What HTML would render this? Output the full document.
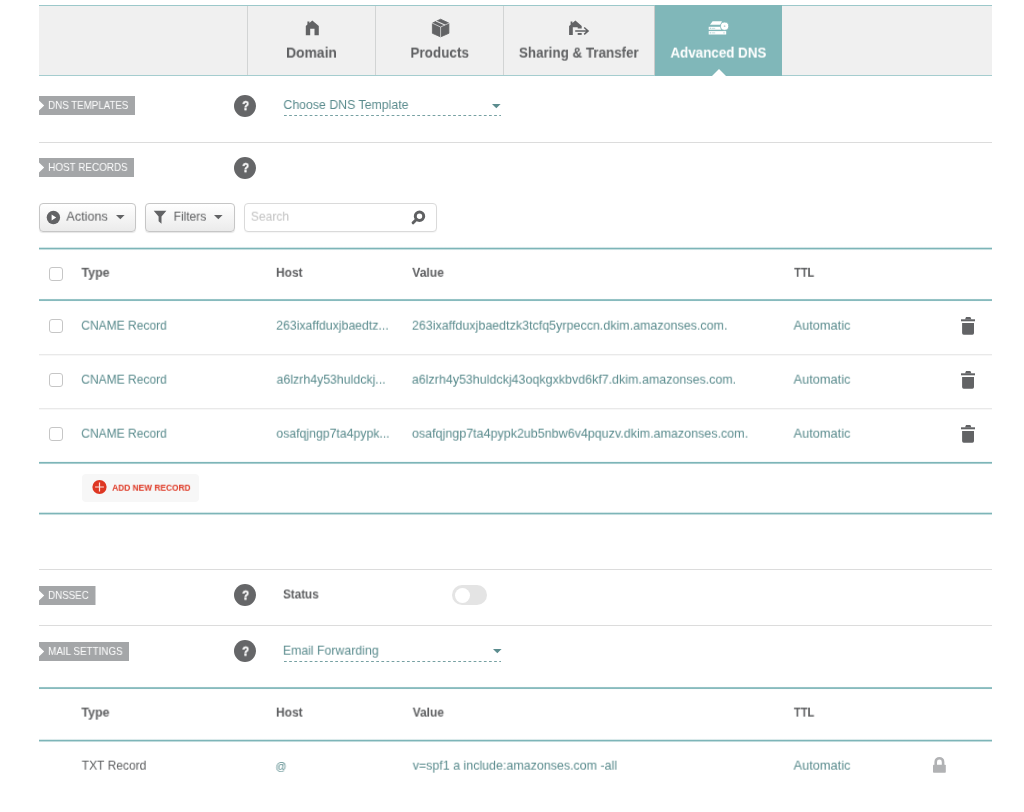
<!DOCTYPE html>
<html lang="en">
<head>
<meta charset="utf-8">
<title>Advanced DNS</title>
<style>
html,body{margin:0;padding:0;background:#fff;}
body{width:1024px;height:812px;position:relative;overflow:hidden;font-family:"Liberation Sans",sans-serif;}
.t{position:absolute;will-change:transform;white-space:nowrap;line-height:20px;height:20px;transform-origin:0 50%;}
.q{-webkit-text-stroke:0.35px #fff;}
.ic{position:absolute;display:block;overflow:visible;}
.tabbar{position:absolute;left:39px;top:5px;width:953px;height:69px;background:#f0f0f0;border-top:1px solid #9cc8ca;border-bottom:1px solid #a5cdcf;}
.vsep{position:absolute;top:6px;width:1px;height:69px;background:#d2d4d4;}
.active{position:absolute;left:655px;top:5px;width:127px;height:71px;background:#80b7b9;}
.notch{position:absolute;left:711.5px;top:69px;width:0;height:0;border-left:7px solid transparent;border-right:7px solid transparent;border-bottom:7px solid #fff;}
.tag{position:absolute;left:39px;height:19px;background:#a4a6a8;clip-path:polygon(0 0,100% 0,100% 100%,0 100%,0 14.5px,5.2px 9.5px,0 4.5px);}
.help{position:absolute;left:234px;width:22px;height:22px;border-radius:50%;background:#656668;}
.hr{position:absolute;left:39px;width:953px;height:1px;background:#dcdcdc;}
.gl{position:absolute;left:39px;width:953px;height:2px;background:linear-gradient(180deg,#e9e9e9 0,#e9e9e9 1px,#f7f7f7 1px,#f7f7f7 2px);}
.tl{position:absolute;left:39px;width:953px;}
.btn{position:absolute;box-sizing:border-box;top:203px;height:29px;border:1px solid #c6c6c6;border-radius:4px;background:linear-gradient(180deg,#ffffff 0%,#f4f4f4 55%,#ebebeb 100%);box-shadow:0 1px 1px rgba(0,0,0,.10);}
.search{position:absolute;left:244px;top:203px;width:191px;height:27px;border:1px solid #dadada;border-radius:4px;background:#fff;box-shadow:0 1px 1px rgba(0,0,0,.04);}
.cb{position:absolute;left:49px;width:12px;height:12px;border:1px solid #c6c6c6;border-radius:3px;background:#fff;}
.addbtn{position:absolute;left:82px;top:474px;width:117px;height:27.5px;border-radius:4px;background:#f7f7f7;}
.toggle{position:absolute;left:452px;top:585.2px;width:35px;height:20px;border-radius:10px;background:#e4e4e4;}
.toggle i{position:absolute;left:2.8px;top:2.5px;width:15px;height:15px;border-radius:50%;background:#fff;}
</style>
</head>
<body>
<nav>
<div class="tabbar"></div>
<div class="vsep" style="left:247px"></div>
<div class="vsep" style="left:375px"></div>
<div class="vsep" style="left:503px"></div>
<div class="vsep" style="left:654px;background:#cbcbcb"></div>
<div class="active"></div>
<div class="notch"></div>
<svg class="ic" style="left:300px;top:14px" width="26" height="26" viewBox="300 14 26 26"><path fill="#626365" d="M305.8 35.3V26l1.6-1.4v-3.1h2v1.5l2.9-2.5 6.5 5.5v9.3h-4.3v-6.6h-4.3v6.6z"/></svg>
<svg class="ic" style="left:428px;top:14px" width="26" height="26" viewBox="428 14 26 26"><path fill="#626365" stroke="#626365" stroke-width="0.8" stroke-linejoin="round" d="M440.6 19.2l8.3 3.9v10.2l-8.3 3.6-8.2-3.6V23.1z"/><g fill="none" stroke="#f0f0f0"><path stroke-width="0.75" opacity=".9" d="M432 23l8.6 4 8.7-4M440.6 27v10.4"/><path stroke-width="1.1" opacity=".9" d="M436 20.9l8.9 4.1"/></g></svg>
<svg class="ic" style="left:565px;top:14px" width="28" height="26" viewBox="565 14 28 26"><g fill="#626365"><path d="M569.1 34.9V26l1.5-1.3v-3.2h1.8v1.6l3-2.6 6.3 5.4v2.6h-4v-1.3h-4.9v7.7z"/><rect x="577.7" y="33" width="4" height="1.9"/></g><path d="M575.2 30.9h12.2M584.2 27.5l3.9 3.4-3.9 3.5" fill="none" stroke="#626365" stroke-width="1.5"/></svg>
<svg class="ic" style="left:704px;top:16px" width="28" height="24" viewBox="704 16 28 24"><g fill="#fff"><path d="M710 24.8l2.6-3.6h9.3l-1.4 3.6z"/><rect x="708.7" y="26.8" width="12.2" height="2.9"/><rect x="708.7" y="31.1" width="17.5" height="3.4"/><circle cx="724.6" cy="26.2" r="4.1" stroke="#80b7b9" stroke-width="0.8"/></g><g fill="#80b7b9"><rect x="709.8" y="27.7" width="0.9" height="1.1"/><rect x="711.6" y="27.9" width="3.6" height="0.8" opacity=".6"/><rect x="709.8" y="32.3" width="0.9" height="1.1"/><rect x="711.6" y="32.5" width="3.6" height="0.8" opacity=".6"/><rect x="723" y="32.5" width="2" height="0.8" opacity=".5"/><circle cx="724.6" cy="26.2" r="0.9" opacity=".6"/></g></svg>
<span class="t " style="left:286px;top:42px;font-size:15px;color:#5f6062;font-weight:700;transform:translate(0.10px,0.60px) scaleX(0.9231);">Domain</span>
<span class="t " style="left:410px;top:42px;font-size:15px;color:#5f6062;font-weight:700;transform:translate(0.46px,0.60px) scaleX(0.8987);">Products</span>
<span class="t " style="left:518px;top:42px;font-size:15px;color:#5f6062;font-weight:700;transform:translate(0.93px,0.60px) scaleX(0.8926);">Sharing &amp; Transfer</span>
<span class="t " style="left:670px;top:42px;font-size:15px;color:#ffffff;font-weight:700;transform:translate(0.43px,0.60px) scaleX(0.8921);">Advanced DNS</span>
</nav>
<section>
<div class="tag" style="top:96px;width:96px"></div>
<span class="t " style="left:48px;top:94px;font-size:11px;color:#ffffff;transform:translate(0.18px,0.90px) scaleX(0.8840);">DNS TEMPLATES</span>
<div class="help" style="top:94.5px"></div>
<span class="t q" style="left:242px;top:96px;font-size:12.5px;color:#ffffff;font-weight:700;transform:translate(0.33px,0.10px) scaleX(0.8864);">?</span>
<span class="t " style="left:283px;top:94px;font-size:13px;color:#5b8c8e;transform:translate(0.41px,0.95px) scaleX(0.9474);">Choose DNS Template</span>
<svg class="ic" style="left:284px;top:115px" width="217" height="1" viewBox="0 0 217 1"><line x1="0" y1="0.5" x2="217" y2="0.5" stroke="#76a0a2" stroke-width="1" stroke-dasharray="2.75 2.375"/></svg>
<svg class="ic" style="left:492.3px;top:104px" width="9" height="5" viewBox="0 0 9 5"><path fill="#5b8c8e" d="M0 0h8.6L4.3 4.3z"/></svg>
</section>
<section>
<div class="hr" style="top:142px"></div>
<div class="tag" style="top:158px;width:95px"></div>
<span class="t " style="left:48px;top:156px;font-size:11px;color:#ffffff;transform:translate(0.18px,0.90px) scaleX(0.8986);">HOST RECORDS</span>
<div class="help" style="top:156.5px"></div>
<span class="t q" style="left:242px;top:158px;font-size:12.5px;color:#ffffff;font-weight:700;transform:translate(0.33px,0.10px) scaleX(0.8864);">?</span>
<div class="btn" style="left:39px;width:96.8px"></div>
<svg class="ic" style="left:46px;top:210px" width="15" height="15" viewBox="46 210 15 15"><circle cx="53.4" cy="217.5" r="6.7" fill="#626365"/><path fill="#fff" d="M51.6 214.6l4.6 2.9-4.6 2.9z"/></svg>
<span class="t " style="left:66px;top:206px;font-size:13px;color:#5f6062;transform:translate(0.36px,0.65px) scaleX(0.9688);">Actions</span>
<svg class="ic" style="left:115.5px;top:215.2px" width="9" height="5" viewBox="0 0 9 5"><path fill="#626365" d="M0 0h8.6L4.3 4.3z"/></svg>
<div class="btn" style="left:145.3px;width:89.4px"></div>
<svg class="ic" style="left:152px;top:209px" width="16" height="16" viewBox="152 209 16 16"><path fill="#626365" d="M153.7 210.8h12.7l-4.9 5.8v7.1l-2.9-2.4v-4.7z"/></svg>
<span class="t " style="left:173px;top:206px;font-size:13px;color:#5f6062;transform:translate(0.63px,0.65px) scaleX(0.9188);">Filters</span>
<svg class="ic" style="left:213.5px;top:215.2px" width="9" height="5" viewBox="0 0 9 5"><path fill="#626365" d="M0 0h8.6L4.3 4.3z"/></svg>
<div class="search"></div>
<span class="t " style="left:250px;top:206px;font-size:13px;color:#c2c2c2;transform:translate(0.83px,0.65px) scaleX(0.9261);">Search</span>
<svg class="ic" style="left:409px;top:208px" width="18" height="18" viewBox="409 208 18 18"><circle cx="419.5" cy="216.2" r="4.2" fill="none" stroke="#5f6062" stroke-width="3"/><path d="M416.4 219.5l-3.3 3.3" stroke="#5f6062" stroke-width="3" stroke-linecap="round"/></svg>
<div class="tl" style="top:246px;height:5px;background:linear-gradient(180deg,rgba(125,181,184,0.01) 0px,rgba(125,181,184,0.01) 1px,rgba(125,181,184,0.33) 1px,rgba(125,181,184,0.33) 2px,rgba(125,181,184,1.00) 2px,rgba(125,181,184,1.00) 3px,rgba(125,181,184,0.43) 3px,rgba(125,181,184,0.43) 4px,rgba(125,181,184,0.01) 4px,rgba(125,181,184,0.01) 5px)"></div>
<div class="cb" style="top:267px"></div>
<span class="t " style="left:81px;top:262px;font-size:12.5px;color:#5f6062;font-weight:700;transform:translate(0.48px,0.80px) scaleX(0.9940);">Type</span>
<span class="t " style="left:276px;top:262px;font-size:12.5px;color:#5f6062;font-weight:700;transform:translate(0.00px,0.80px) scaleX(0.9575);">Host</span>
<span class="t " style="left:412px;top:262px;font-size:12.5px;color:#5f6062;font-weight:700;transform:translate(0.24px,0.80px) scaleX(0.9697);">Value</span>
<span class="t " style="left:794px;top:262px;font-size:12.5px;color:#5f6062;font-weight:700;transform:translate(0.21px,0.80px) scaleX(0.8721);">TTL</span>
<div class="tl" style="top:298px;height:4px;background:linear-gradient(180deg,rgba(125,181,184,0.02) 0px,rgba(125,181,184,0.02) 1px,rgba(125,181,184,0.81) 1px,rgba(125,181,184,0.81) 2px,rgba(125,181,184,0.92) 2px,rgba(125,181,184,0.92) 3px,rgba(125,181,184,0.03) 3px,rgba(125,181,184,0.03) 4px)"></div>
<div class="cb" style="top:319px"></div>
<span class="t " style="left:81px;top:315px;font-size:13px;color:#5b8c8e;transform:translate(0.24px,0.65px) scaleX(0.9248);">CNAME Record</span>
<span class="t " style="left:276px;top:315px;font-size:13px;color:#5b8c8e;transform:translate(0.17px,0.65px) scaleX(0.9449);">263ixaffduxjbaedtz...</span>
<span class="t " style="left:411px;top:315px;font-size:13px;color:#5b8c8e;transform:translate(0.90px,0.65px) scaleX(0.9606);">263ixaffduxjbaedtzk3tcfq5yrpeccn.dkim.amazonses.com.</span>
<span class="t " style="left:793px;top:315px;font-size:13px;color:#5b8c8e;transform:translate(0.56px,0.65px) scaleX(0.9834);">Automatic</span>
<svg class="ic" style="left:959px;top:316px" width="18" height="20" viewBox="959 316 18 20"><g fill="#626365"><path d="M965 319.4l1-2.4h4.4l1 2.4z"/><rect x="961" y="319.3" width="14" height="2"/><path d="M962.1 323.1H974v10q0 1.6-1.6 1.6h-8.7q-1.6 0-1.6-1.6z"/></g></svg>
<div class="gl" style="top:354px"></div>
<div class="cb" style="top:373px"></div>
<span class="t " style="left:81px;top:369px;font-size:13px;color:#5b8c8e;transform:translate(0.24px,0.65px) scaleX(0.9248);">CNAME Record</span>
<span class="t " style="left:276px;top:369px;font-size:13px;color:#5b8c8e;transform:translate(0.56px,0.65px) scaleX(0.9487);">a6lzrh4y53huldckj...</span>
<span class="t " style="left:411px;top:369px;font-size:13px;color:#5b8c8e;transform:translate(0.82px,0.65px) scaleX(0.9590);">a6lzrh4y53huldckj43oqkgxkbvd6kf7.dkim.amazonses.com.</span>
<span class="t " style="left:793px;top:369px;font-size:13px;color:#5b8c8e;transform:translate(0.56px,0.65px) scaleX(0.9834);">Automatic</span>
<svg class="ic" style="left:959px;top:370px" width="18" height="20" viewBox="959 316 18 20"><g fill="#626365"><path d="M965 319.4l1-2.4h4.4l1 2.4z"/><rect x="961" y="319.3" width="14" height="2"/><path d="M962.1 323.1H974v10q0 1.6-1.6 1.6h-8.7q-1.6 0-1.6-1.6z"/></g></svg>
<div class="gl" style="top:408px"></div>
<div class="cb" style="top:427px"></div>
<span class="t " style="left:81px;top:423px;font-size:13px;color:#5b8c8e;transform:translate(0.24px,0.65px) scaleX(0.9248);">CNAME Record</span>
<span class="t " style="left:276px;top:423px;font-size:13px;color:#5b8c8e;transform:translate(0.35px,0.65px) scaleX(0.9436);">osafqjngp7ta4pypk...</span>
<span class="t " style="left:411px;top:423px;font-size:13px;color:#5b8c8e;transform:translate(0.91px,0.65px) scaleX(0.9619);">osafqjngp7ta4pypk2ub5nbw6v4pquzv.dkim.amazonses.com.</span>
<span class="t " style="left:793px;top:423px;font-size:13px;color:#5b8c8e;transform:translate(0.56px,0.65px) scaleX(0.9834);">Automatic</span>
<svg class="ic" style="left:959px;top:424px" width="18" height="20" viewBox="959 316 18 20"><g fill="#626365"><path d="M965 319.4l1-2.4h4.4l1 2.4z"/><rect x="961" y="319.3" width="14" height="2"/><path d="M962.1 323.1H974v10q0 1.6-1.6 1.6h-8.7q-1.6 0-1.6-1.6z"/></g></svg>
<div class="tl" style="top:460px;height:5px;background:linear-gradient(180deg,rgba(125,181,184,0.00) 0px,rgba(125,181,184,0.00) 1px,rgba(125,181,184,0.09) 1px,rgba(125,181,184,0.09) 2px,rgba(125,181,184,1.00) 2px,rgba(125,181,184,1.00) 3px,rgba(125,181,184,0.67) 3px,rgba(125,181,184,0.67) 4px,rgba(125,181,184,0.02) 4px,rgba(125,181,184,0.02) 5px)"></div>
<div class="addbtn"></div>
<svg class="ic" style="left:92px;top:479px" width="16" height="16" viewBox="92 479 16 16"><circle cx="99.5" cy="487" r="7.1" fill="#de3723"/><path d="M99.5 482.6v8.8M95.1 487h8.8" stroke="#fbe3df" stroke-width="1.2"/></svg>
<span class="t " style="left:112px;top:477px;font-size:9px;color:#de3723;font-weight:700;transform:translate(0.18px,0.70px) scaleX(0.9274);">ADD NEW RECORD</span>
<div class="tl" style="top:511px;height:5px;background:linear-gradient(180deg,rgba(125,181,184,0.01) 0px,rgba(125,181,184,0.01) 1px,rgba(125,181,184,0.32) 1px,rgba(125,181,184,0.32) 2px,rgba(125,181,184,1.00) 2px,rgba(125,181,184,1.00) 3px,rgba(125,181,184,0.44) 3px,rgba(125,181,184,0.44) 4px,rgba(125,181,184,0.01) 4px,rgba(125,181,184,0.01) 5px)"></div>
</section>
<section>
<div class="hr" style="top:569px"></div>
<div class="tag" style="top:586px;width:56.5px"></div>
<span class="t " style="left:48px;top:584px;font-size:11px;color:#ffffff;transform:translate(0.18px,0.90px) scaleX(0.8822);">DNSSEC</span>
<div class="help" style="top:584px"></div>
<span class="t q" style="left:242px;top:585px;font-size:12.5px;color:#ffffff;font-weight:700;transform:translate(0.21px,0.60px) scaleX(0.9049);">?</span>
<span class="t " style="left:283px;top:584px;font-size:12.5px;color:#5f6062;font-weight:700;transform:translate(0.07px,0.50px) scaleX(0.9324);">Status</span>
<div class="toggle"><i></i></div>
</section>
<section>
<div class="hr" style="top:625px"></div>
<div class="tag" style="top:642px;width:90px"></div>
<span class="t " style="left:48px;top:640px;font-size:11px;color:#ffffff;transform:translate(0.16px,0.90px) scaleX(0.8934);">MAIL SETTINGS</span>
<div class="help" style="top:640px"></div>
<span class="t q" style="left:242px;top:641px;font-size:12.5px;color:#ffffff;font-weight:700;transform:translate(0.21px,0.60px) scaleX(0.9049);">?</span>
<span class="t " style="left:282px;top:640px;font-size:13px;color:#5b8c8e;transform:translate(0.85px,0.65px) scaleX(0.9466);">Email Forwarding</span>
<svg class="ic" style="left:284px;top:661px" width="217" height="1" viewBox="0 0 217 1"><line x1="0" y1="0.5" x2="217" y2="0.5" stroke="#76a0a2" stroke-width="1" stroke-dasharray="2.75 2.375"/></svg>
<svg class="ic" style="left:493px;top:649px" width="9" height="5" viewBox="0 0 9 5"><path fill="#5b8c8e" d="M0 0h8.6L4.3 4.3z"/></svg>
<div class="tl" style="top:686px;height:4px;background:linear-gradient(180deg,rgba(125,181,184,0.02) 0px,rgba(125,181,184,0.02) 1px,rgba(125,181,184,0.81) 1px,rgba(125,181,184,0.81) 2px,rgba(125,181,184,0.92) 2px,rgba(125,181,184,0.92) 3px,rgba(125,181,184,0.03) 3px,rgba(125,181,184,0.03) 4px)"></div>
<span class="t " style="left:81px;top:702px;font-size:12.5px;color:#5f6062;font-weight:700;transform:translate(0.39px,0.60px) scaleX(0.9959);">Type</span>
<span class="t " style="left:275px;top:702px;font-size:12.5px;color:#5f6062;font-weight:700;transform:translate(0.98px,0.60px) scaleX(0.9624);">Host</span>
<span class="t " style="left:412px;top:702px;font-size:12.5px;color:#5f6062;font-weight:700;transform:translate(0.69px,0.60px) scaleX(0.9565);">Value</span>
<span class="t " style="left:793px;top:702px;font-size:12.5px;color:#5f6062;font-weight:700;transform:translate(0.89px,0.60px) scaleX(0.8907);">TTL</span>
<div class="tl" style="top:738px;height:5px;background:linear-gradient(180deg,rgba(125,181,184,0.01) 0px,rgba(125,181,184,0.01) 1px,rgba(125,181,184,0.28) 1px,rgba(125,181,184,0.28) 2px,rgba(125,181,184,1.00) 2px,rgba(125,181,184,1.00) 3px,rgba(125,181,184,0.48) 3px,rgba(125,181,184,0.48) 4px,rgba(125,181,184,0.01) 4px,rgba(125,181,184,0.01) 5px)"></div>
<span class="t " style="left:81px;top:755px;font-size:13px;color:#5f6062;transform:translate(0.72px,0.65px) scaleX(0.9261);">TXT Record</span>
<span class="t " style="left:275px;top:756px;font-size:11px;color:#5b8c8e;transform:translate(0.51px,0.00px) scaleX(0.9829);">@</span>
<span class="t " style="left:412px;top:755px;font-size:13px;color:#5b8c8e;transform:translate(0.72px,0.65px) scaleX(0.9566);">v=spf1 a include:amazonses.com -all</span>
<span class="t " style="left:793px;top:755px;font-size:13px;color:#5b8c8e;transform:translate(0.56px,0.65px) scaleX(0.9834);">Automatic</span>
<svg class="ic" style="left:931px;top:755px" width="17" height="20" viewBox="931 755 17 20"><path d="M935.7 765.5v-3.6a3.7 3.7 0 0 1 7.4 0v3.6" fill="none" stroke="#b1b2b4" stroke-width="2.6"/><rect x="933" y="764.7" width="12.8" height="8.1" rx="0.8" fill="#b1b2b4"/></svg>
</section>
</body>
</html>
